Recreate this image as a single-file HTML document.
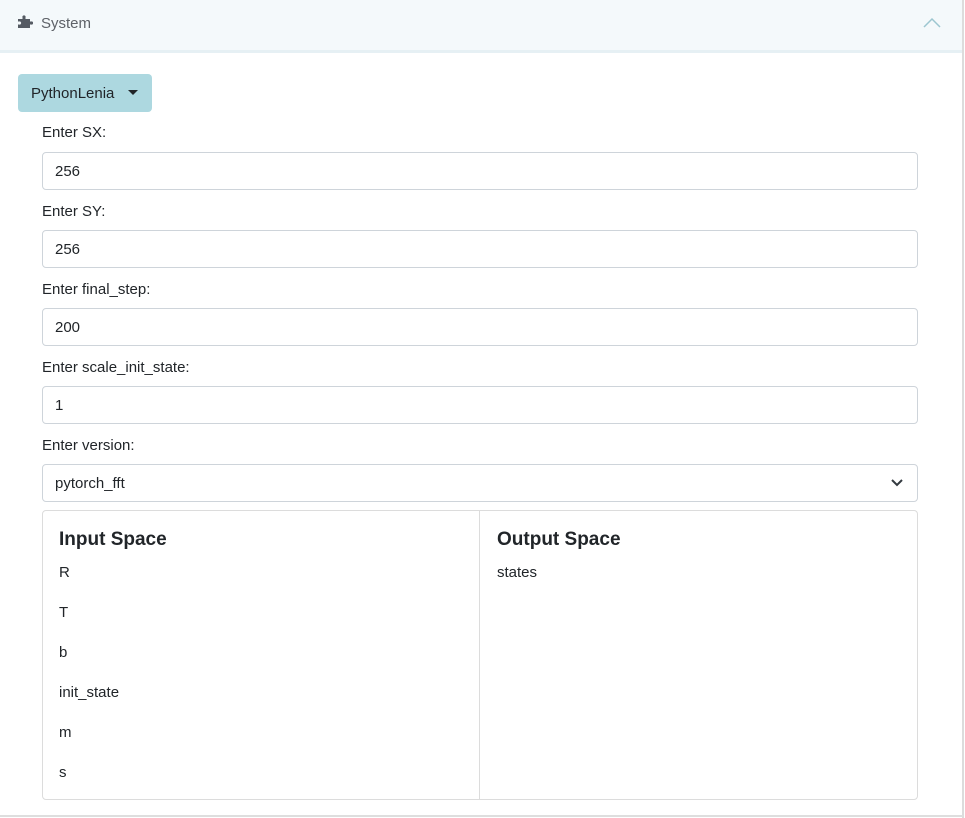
<!DOCTYPE html>
<html><head><meta charset="utf-8"><style>
*{box-sizing:border-box;margin:0;padding:0}
body{width:965px;height:818px;background:#fff;font-family:"Liberation Sans",sans-serif;color:#212529;position:relative;overflow:hidden;font-size:15px}
.hdr{position:absolute;left:0;top:0;width:962px;height:53px;background:#f4f9fb;border-bottom:3px solid #e6f0f4}
.rb{position:absolute;left:962px;top:0;width:2px;height:818px;background:#dcdcdc}
.bb{position:absolute;left:0;top:815px;width:963px;height:2px;background:#dedede}
.t{position:absolute;white-space:nowrap}
.btn{position:absolute;left:18px;top:74px;width:134px;height:38px;background:#add8e0;border-radius:4px}
.inp{position:absolute;left:42px;width:876px;height:38px;border:1px solid #ced4da;border-radius:4px;padding:0 12px;line-height:38px}
.lbl{position:absolute;left:42px}
.box{position:absolute;left:42px;top:510px;width:876px;height:290px;border:1px solid #dcdcdc;border-radius:4px}
.div{position:absolute;left:479px;top:511px;width:1px;height:288px;background:#dcdcdc}
h3{font-size:19px;font-weight:bold;position:absolute}
</style></head><body>
<div class="hdr"></div>
<svg class="t" style="left:18px;top:15px" width="15" height="13" viewBox="0 0 15 13"><path d="M0 4h4.5V2.5a1.6 1.6 0 1 1 3 0V4H12V6.5h1a1.6 1.6 0 1 1 0 3h-1V13H0V9.5h1a1.6 1.6 0 1 0 0-3H0z" fill="#555b63"/></svg>
<div class="t" style="left:41px;top:15px;color:#5e6268;font-size:15px">System</div>
<svg class="t" style="left:923px;top:17px" width="18" height="11"><path d="M1 10L9 2l8 8" stroke="#9cc6d0" stroke-width="1.5" fill="none"/></svg>
<div class="btn"></div>
<div class="t" style="left:31px;top:85px">PythonLenia</div>
<svg class="t" style="left:128px;top:90px" width="11" height="6"><path d="M0 0h10L5 5z" fill="#212529"/></svg>
<div class="t lbl" style="top:124px">Enter SX:</div>
<div class="inp" style="top:152px">256</div>
<div class="t lbl" style="top:203px">Enter SY:</div>
<div class="inp" style="top:230px">256</div>
<div class="t lbl" style="top:281px">Enter final_step:</div>
<div class="inp" style="top:308px">200</div>
<div class="t lbl" style="top:359px">Enter scale_init_state:</div>
<div class="inp" style="top:386px">1</div>
<div class="t lbl" style="top:437px">Enter version:</div>
<div class="inp" style="top:464px">pytorch_fft</div>
<svg class="t" style="left:891px;top:479px" width="12" height="8"><path d="M1 1l5 5 5-5" stroke="#343a40" stroke-width="2" fill="none"/></svg>
<div class="box"></div><div class="div"></div>
<h3 style="left:59px;top:529px">Input Space</h3>
<h3 style="left:497px;top:529px">Output Space</h3>
<div class="t" style="left:59px;top:564px">R</div>
<div class="t" style="left:59px;top:604px">T</div>
<div class="t" style="left:59px;top:644px">b</div>
<div class="t" style="left:59px;top:684px">init_state</div>
<div class="t" style="left:59px;top:724px">m</div>
<div class="t" style="left:59px;top:764px">s</div>
<div class="t" style="left:497px;top:564px">states</div>
<div class="rb"></div><div class="bb"></div>
</body></html>
